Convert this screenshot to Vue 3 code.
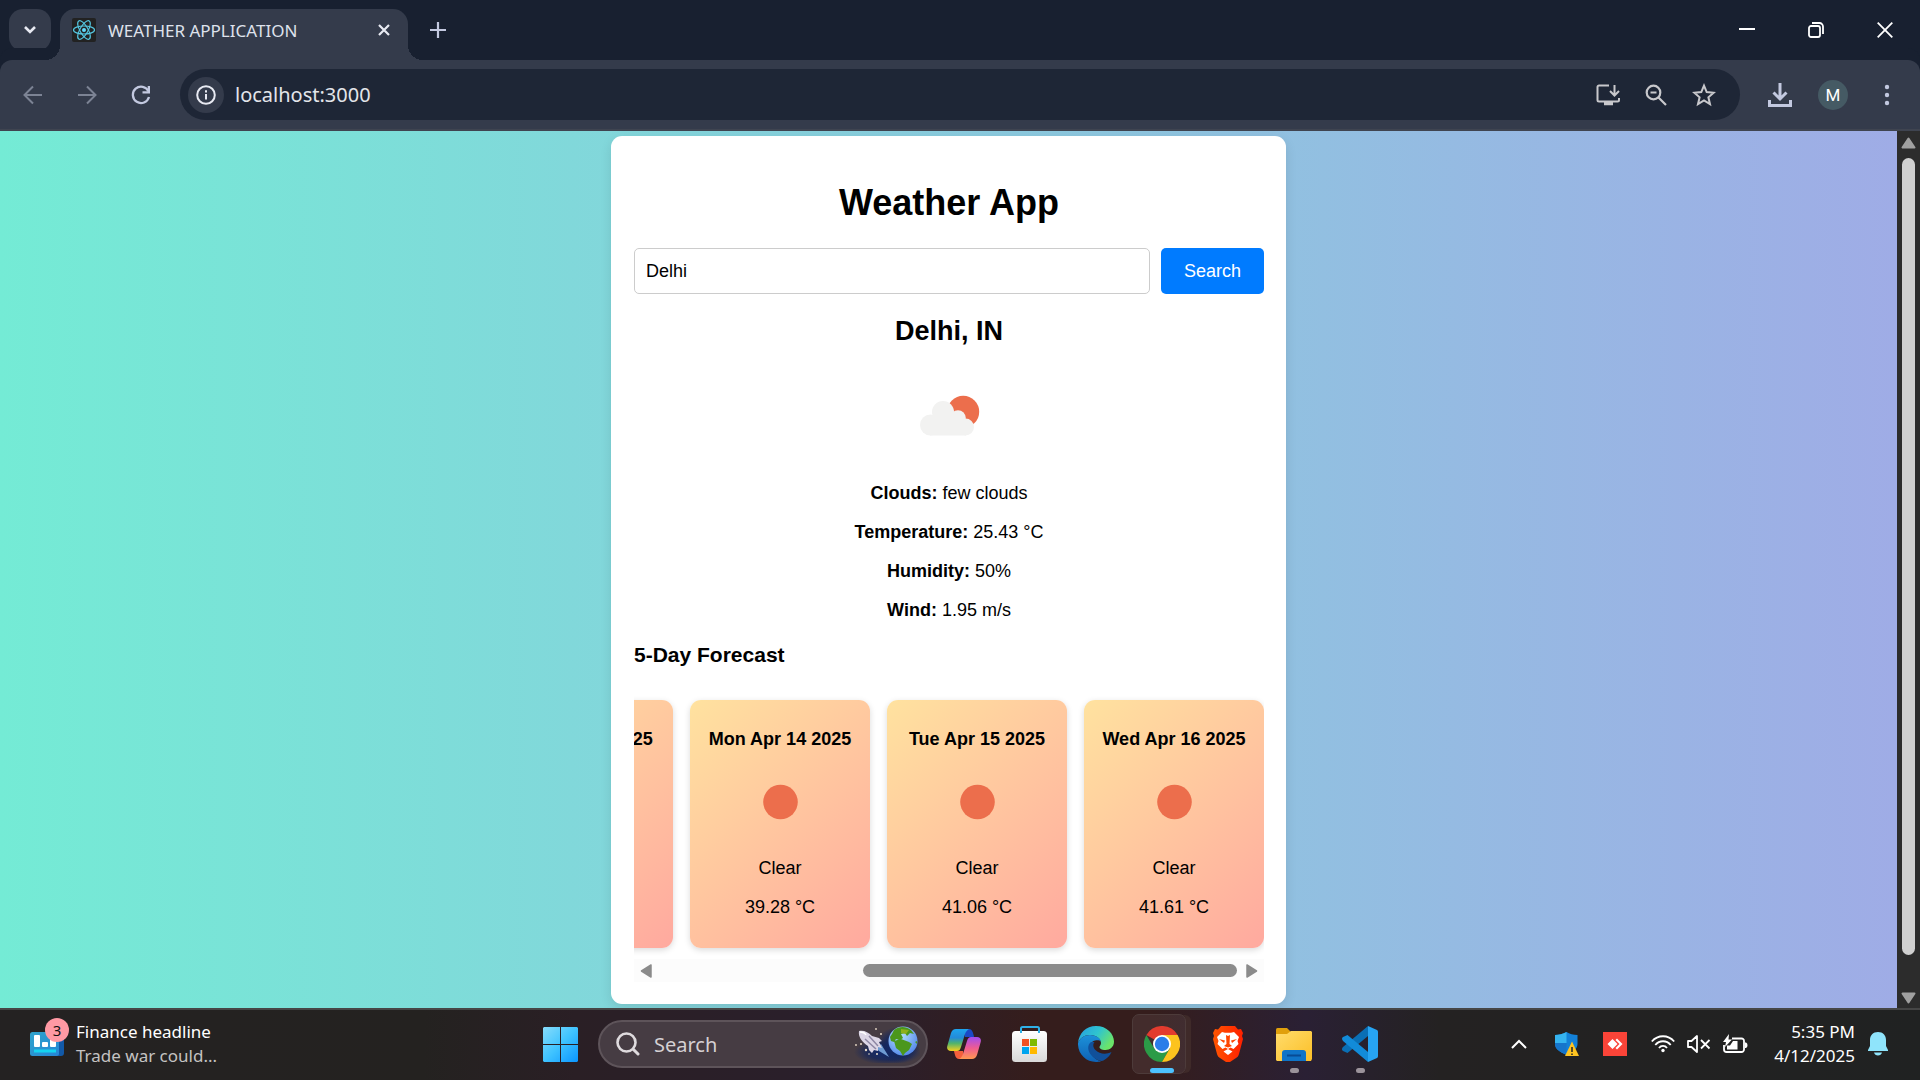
<script setup>
import { ref } from 'vue'

const address = ref('localhost:3000')
const city = ref('Delhi')
const taskQuery = ref('')

const details = [
  { label: 'Clouds:', value: 'few clouds' },
  { label: 'Temperature:', value: '25.43 °C' },
  { label: 'Humidity:', value: '50%' },
  { label: 'Wind:', value: '1.95 m/s' },
]

const forecast = [
  { date: 'Sun Apr 13 2025', sky: 'Clear', temp: '37.46 °C' },
  { date: 'Mon Apr 14 2025', sky: 'Clear', temp: '39.28 °C' },
  { date: 'Tue Apr 15 2025', sky: 'Clear', temp: '41.06 °C' },
  { date: 'Wed Apr 16 2025', sky: 'Clear', temp: '41.61 °C' },
]
</script>

<template>
  <div class="screen">
    <header class="tabs">
      <button class="tab-search" aria-label="Search tabs">
        <svg width="14" height="10" viewBox="0 0 14 10"><path d="M2 2l5 5 5-5" fill="none" stroke="#e8eaf2" stroke-width="2.6" /></svg>
      </button>
      <div class="tab">
        <svg class="favicon" width="24" height="24" viewBox="0 0 24 24">
          <rect width="24" height="24" rx="2" fill="#222" />
          <g fill="none" stroke="#55c8e2" stroke-width="1.2">
            <ellipse cx="12" cy="12" rx="10.5" ry="4" />
            <ellipse cx="12" cy="12" rx="10.5" ry="4" transform="rotate(60 12 12)" />
            <ellipse cx="12" cy="12" rx="10.5" ry="4" transform="rotate(120 12 12)" />
          </g>
          <circle cx="12" cy="12" r="2" fill="#61dafb" />
        </svg>
        <span class="tab-title">WEATHER APPLICATION</span>
        <button class="bare" aria-label="Close tab">
          <svg width="12" height="12" viewBox="0 0 12 12"><path d="M1 1l10 10M11 1L1 11" stroke="#e8eaf2" stroke-width="2.2" /></svg>
        </button>
      </div>
      <button class="bare new-tab" aria-label="New tab">
        <svg width="16" height="16" viewBox="0 0 16 16"><path d="M8 0v16M0 8h16" stroke="#c3c9e0" stroke-width="2.2" /></svg>
      </button>
      <div class="window-controls">
        <button class="bare" aria-label="Minimize"><svg width="16" height="16" viewBox="0 0 16 16"><path d="M0 7h16" stroke="#fff" stroke-width="2" /></svg></button>
        <button class="bare" aria-label="Restore">
          <svg width="16" height="16" viewBox="0 0 16 16" fill="none" stroke="#fff" stroke-width="1.8"><rect x="1" y="4" width="11" height="11" rx="2" /><path d="M4 1h7.500a3.500 3.500 0 0 1 3.500 3.500V12" /></svg>
        </button>
        <button class="bare" aria-label="Close"><svg width="16" height="16" viewBox="0 0 16 16"><path d="M.7.7l14.600 14.600M15.300.7L.7 15.300" stroke="#fff" stroke-width="1.800" /></svg></button>
      </div>
    </header>

    <nav class="toolbar">
      <button class="bare" aria-label="Back"><svg width="20" height="20" viewBox="0 0 20 20"><path d="M19 10H2M10 1.500L1.500 10l8.500 8.500" fill="none" stroke="#7c8394" stroke-width="2" /></svg></button>
      <button class="bare" aria-label="Forward"><svg width="20" height="20" viewBox="0 0 20 20"><path d="M1 10h17M10 1.500l8.500 8.500-8.500 8.500" fill="none" stroke="#7c8394" stroke-width="2" /></svg></button>
      <button class="bare" aria-label="Reload"><svg width="20" height="20" viewBox="0 0 20 20"><path d="M17.500 6.300A8.200 8.200 0 1 0 18 12" fill="none" stroke="#c3c9e0" stroke-width="2.300" /><path d="M19 1v7.500h-7.500V6.200h5.200V1z" fill="#c3c9e0" /></svg></button>
      <div class="omnibox">
        <button class="site-info" aria-label="Site information">
          <svg width="20" height="20" viewBox="0 0 20 20"><circle cx="10" cy="10" r="8.800" fill="none" stroke="#e8eaf2" stroke-width="2" /><path d="M10 9v5.500M10 5.300v2.200" stroke="#e8eaf2" stroke-width="2" /></svg>
        </button>
        <input v-model="address" class="address" type="text" aria-label="Address" />
        <button class="bare" aria-label="Install app">
          <svg width="24" height="22" viewBox="0 0 24 22" fill="none" stroke="#c8c8cc" stroke-width="2"><path d="M13 1.500H3A1.500 1.500 0 0 0 1.500 3v13A1.500 1.500 0 0 0 3 17.500h18.500A1.500 1.500 0 0 0 23 16v-2" /><path d="M18.500 1v10M14 7l4.500 4.500L23 7" /><path d="M8 19.500h9" stroke-width="3.500" /></svg>
        </button>
        <button class="bare" aria-label="Zoom">
          <svg width="22" height="22" viewBox="0 0 22 22" fill="none" stroke="#c8c8cc" stroke-width="2.200"><circle cx="8.500" cy="8.500" r="6.800" /><path d="M13.500 13.500l7.500 7.500M5.500 8.500h6" /></svg>
        </button>
        <button class="bare" aria-label="Bookmark">
          <svg width="24" height="24" viewBox="0 0 24 24"><path d="M12 2.600l2.700 6.500 7 .6-5.300 4.600 1.600 6.900-6-3.700-6 3.700 1.600-6.900-5.300-4.600 7-.6z" fill="none" stroke="#c8c8cc" stroke-width="2" /></svg>
        </button>
      </div>
      <button class="bare" aria-label="Downloads">
        <svg width="24" height="26" viewBox="0 0 24 26" fill="none" stroke="#c3c9e0" stroke-width="3"><path d="M12 1v15M5.500 10.500L12 17l6.500-6.500M1.500 18v5.500h21V18" /></svg>
      </button>
      <button class="avatar" aria-label="Profile">M</button>
      <button class="bare" aria-label="Menu"><svg width="6" height="22" viewBox="0 0 6 22" fill="#c3c9e0"><circle cx="3" cy="3" r="2.200" /><circle cx="3" cy="11" r="2.200" /><circle cx="3" cy="19" r="2.200" /></svg></button>
    </nav>

    <div class="viewport">
      <main class="page">
        <section class="app">
          <h1>Weather App</h1>
          <form class="search" @submit.prevent>
            <input v-model="city" type="text" aria-label="City" />
            <button type="submit">Search</button>
          </form>

          <h2>Delhi, IN</h2>
          <div class="sky-now">
            <svg width="90" height="90" viewBox="0 0 90 90">
              <circle cx="59.200" cy="42.800" r="16" fill="#ec6e4c" />
              <g fill="#f2f2f1">
                <circle cx="39" cy="43" r="11" />
                <circle cx="26.500" cy="56" r="10.500" />
                <circle cx="54" cy="49" r="7.800" />
                <circle cx="61.500" cy="58" r="8.500" />
                <path d="M26 50h36v16.500H26z" />
              </g>
            </svg>
          </div>
          <p v-for="item in details" :key="item.label"><strong>{{ item.label }}</strong> {{ item.value }}</p>

          <h3>5-Day Forecast</h3>
          <ul class="forecast">
            <li v-for="day in forecast" :key="day.date" class="day">
              <p><strong>{{ day.date }}</strong></p>
              <div class="sky-day">
                <svg width="68" height="68" viewBox="0 0 68 68"><circle cx="34.500" cy="34" r="17.300" fill="#ec6e4c" /></svg>
              </div>
              <p>{{ day.sky }}</p>
              <p>{{ day.temp }}</p>
            </li>
          </ul>
          <div class="h-scroll">
            <button class="bare" aria-label="Scroll left"><svg width="12" height="14" viewBox="0 0 12 14"><path d="M11 1v12L1.500 7z" fill="#8b8b8b" stroke="#8b8b8b" stroke-width="1.500" stroke-linejoin="round" /></svg></button>
            <div class="h-track"><div class="h-thumb"></div></div>
            <button class="bare" aria-label="Scroll right"><svg width="12" height="14" viewBox="0 0 12 14"><path d="M1 1v12l9.500-6z" fill="#8b8b8b" stroke="#8b8b8b" stroke-width="1.500" stroke-linejoin="round" /></svg></button>
          </div>
        </section>
      </main>
      <div class="v-scroll">
        <button class="bare" aria-label="Scroll up"><svg width="15" height="12" viewBox="0 0 15 12"><path d="M1.500 10.500h12L7.500 1.500z" fill="#a0a0a0" stroke="#a0a0a0" stroke-width="2" stroke-linejoin="round" /></svg></button>
        <div class="v-track"><div class="v-thumb"></div></div>
        <button class="bare" aria-label="Scroll down"><svg width="15" height="12" viewBox="0 0 15 12"><path d="M1.500 1.500h12l-6 9z" fill="#a0a0a0" stroke="#a0a0a0" stroke-width="2" stroke-linejoin="round" /></svg></button>
      </div>
    </div>

    <footer class="taskbar">
      <button class="widget">
        <span class="widget-icon">
          <svg width="34" height="24" viewBox="0 0 34 24">
            <defs><linearGradient id="fin" x1="0" x2="1" y1="0" y2="1"><stop offset="0" stop-color="#2fa3cb" /><stop offset="1" stop-color="#2686d6" /></linearGradient></defs>
            <path d="M26 0h5a3 3 0 0 1 3 3v18a3 3 0 0 1-3 3h-5z" fill="#1259a8" />
            <rect width="29" height="24" rx="2.500" fill="url(#fin)" />
            <path d="M4 17.500h22v3H4z" fill="#14d4f0" />
            <rect x="4" y="3" width="6" height="12" rx="1" fill="#fff" /><rect x="12" y="10" width="6" height="5" rx="1" fill="#fff" /><rect x="20" y="5" width="6" height="10" rx="1" fill="#fff" />
          </svg>
          <span class="badge">3</span>
        </span>
        <span class="widget-text"><span>Finance headline</span><span class="dim">Trade war could...</span></span>
      </button>

      <div class="dock">
        <button class="cell" aria-label="Start">
          <svg width="35" height="35" viewBox="0 0 35 35">
            <defs><linearGradient id="win" gradientUnits="userSpaceOnUse" x1="0" y1="0" x2="35" y2="35"><stop offset="0" stop-color="#87dcfb" /><stop offset=".5" stop-color="#3fc3ff" /><stop offset="1" stop-color="#0a95ff" /></linearGradient></defs>
            <path d="M1 0h16v17H0V1zM18 0h16l1 1v16H18zM0 18h17v17H1l-1-1zM18 18h17v16l-1 1H18z" fill="url(#win)" />
          </svg>
        </button>
        <div class="task-search">
          <svg width="24" height="24" viewBox="0 0 24 24" fill="none" stroke="#dfdbde" stroke-linecap="round"><circle cx="10.500" cy="10.500" r="9" stroke-width="2.600" /><path d="M17.500 17.500l4.500 4.500" stroke-width="3" /></svg>
          <input v-model="taskQuery" type="text" placeholder="Search" aria-label="Search Windows" />
          <svg width="66" height="38" viewBox="0 0 66 38">
            <defs>
              <radialGradient id="glow"><stop offset="0" stop-color="#0d2a78" /><stop offset=".6" stop-color="#14265c" stop-opacity=".8" /><stop offset="1" stop-color="#14265c" stop-opacity="0" /></radialGradient>
              <radialGradient id="sea" cx=".4" cy=".3" r=".8"><stop offset="0" stop-color="#b6e2ff" /><stop offset="1" stop-color="#4a7fe8" /></radialGradient>
            </defs>
            <ellipse cx="34" cy="27" rx="34" ry="13" fill="url(#glow)" /><ellipse cx="44" cy="20" rx="22" ry="18" fill="url(#glow)" />
            <path d="M22 23l5-4 8 13-10-6z" fill="#86b8ee" opacity=".8" />
            <path d="M5 6c5-1 9 1 13 5l7 2 3 3-3 1 3 6-4-1v4l-4-1-2 3-3-3-1-4C8 17 4 12 5 6z" fill="#dcd6e6" />
            <path d="M11 14l11 10M15 11l9 10" stroke="#8e87a4" stroke-width="1.500" /><path d="M6 7c3 0 5 1 6 3" stroke="#fff" stroke-width="1.500" fill="none" />
            <g fill="#e9dcc8"><circle cx="22" cy="4" r=".9" /><circle cx="27" cy="9" r="1" /><circle cx="2" cy="20" r=".9" /><circle cx="7" cy="19" r="1" /><circle cx="12" cy="25" r="1.200" /><circle cx="15" cy="29" r=".8" /><circle cx="23" cy="29" r="1" /></g>
            <circle cx="49" cy="16" r="14.500" fill="url(#sea)" />
            <path d="M40 5c5-4 12-4 17 0l3 4-4-1-3 3-2-3-4 1 2 4-3 2-4-1-2 3-3-1-1-4 2-3zM40 16l7-2 8 3 3 2-3 6-4 3-2 3-3-5-4-3zM61 17l2-1v3z" fill="#4b971d" /><path d="M47 4l8 1-3 4-5-1z" fill="#8eb01c" />
          </svg>
        </div>
        <button class="cell" aria-label="Copilot">
          <svg width="34" height="30" viewBox="0 0 34 30">
            <defs>
              <linearGradient id="cpA" x1="0" x2="0" y1="0" y2="1"><stop offset="0" stop-color="#1ea4ee" /><stop offset=".4" stop-color="#238bd8" /><stop offset=".65" stop-color="#50b36c" /><stop offset="1" stop-color="#f6d01d" /></linearGradient>
              <linearGradient id="cpB" x1="0" x2="0" y1="0" y2="1"><stop offset="0" stop-color="#a14cf0" /><stop offset=".5" stop-color="#ee5c92" /><stop offset="1" stop-color="#ff9850" /></linearGradient>
            </defs>
            <path d="M17 0h5c3 0 4 3 5 8h-9z" fill="#1b49c6" />
            <path d="M17 30h-5c-3 0-4-3-5-8h9z" fill="#f4603c" />
            <path d="M9 0h14c-2 0-4 2-5 5l-4 13c-1 3-2 4-4 4H4c-3 0-4.500-2-3.700-5L4 4C5 1.500 6.500 0 9 0z" fill="url(#cpA)" />
            <path d="M25 30H11c2 0 4-2 5-5l4-13c1-3 2-4 4-4h6c3 0 4.500 2 3.700 5L30 26c-1 2.500-2.500 4-5 4z" fill="url(#cpB)" />
          </svg>
        </button>
        <button class="cell" aria-label="Microsoft Store">
          <svg width="36" height="36" viewBox="0 0 36 36">
            <defs><linearGradient id="bag" x1="0" x2="0" y1="0" y2="1"><stop offset="0" stop-color="#fff" /><stop offset="1" stop-color="#d9d9d9" /></linearGradient></defs>
            <rect y="5" width="35" height="31" rx="3.500" fill="url(#bag)" /><path d="M9 7V2.500A1.500 1.500 0 0 1 10.500 1h15A1.500 1.500 0 0 1 27 2.500V7" fill="none" stroke="#2fb1e8" stroke-width="2" />
            <path d="M10 13h7v7h-7z" fill="#f25022" /><path d="M18 13h7v7h-7z" fill="#7fba00" /><path d="M10 21h7v7h-7z" fill="#00a4ef" /><path d="M18 21h7v7h-7z" fill="#ffb900" />
          </svg>
        </button>
        <button class="cell" aria-label="Edge">
          <svg width="36" height="36" viewBox="0 0 36 36">
            <defs>
              <linearGradient id="edT" x1="0" x2="1" y1="0" y2=".5"><stop offset="0" stop-color="#259be0" /><stop offset=".55" stop-color="#2fc4cf" /><stop offset="1" stop-color="#6be46a" /></linearGradient>
              <linearGradient id="edB" x1="0" x2="0" y1="0" y2="1"><stop offset="0" stop-color="#1c91d9" /><stop offset="1" stop-color="#0f62b5" /></linearGradient>
            </defs>
            <path d="M0 17C1 7 8 0 18 0c11 0 18 8 18 15.500C36 21 32 24 27.500 24c-4 0-6.300-1.500-6-3 .3-1.300 1.500-2 1.500-4 0-4-4.500-8-11-8C6 9 2 12 0 17z" fill="url(#edT)" />
            <path d="M0 17c2-5 6-8 12-8 6.500 0 11 4 11 6.500-2-2-9-2-11 3.500-2 7 4 15 11 16.300C21 36 19.500 36 18 36 8 36-.5 28 0 17z" fill="url(#edB)" />
            <path d="M13 16c-4 3-3.500 9 .5 13.500 3.500 4 8.500 6 11.500 5.300 4-2 7-5 8.500-8.800-6 3-12.500 1.500-15.500-1.500-3-2.500-3.500-6-1.500-8.500z" fill="#11509a" />
          </svg>
        </button>
        <button class="cell active" aria-label="Chrome">
          <svg width="36" height="36" viewBox="0 0 36 36">
            <path d="M18 18L2.400 9A18 18 0 0 1 33.600 9z" fill="#e33b2e" /><path d="M2.400 9A18 18 0 0 0 18 36l7.800-13.500L18 18l-7.800 4.500z" fill="#2b9b47" /><path d="M33.600 9A18 18 0 0 1 18 36l7.800-13.500L18 9z" fill="#fcc31e" />
            <circle cx="18" cy="18" r="9" fill="#fff" /><circle cx="18" cy="18" r="7.200" fill="#2a7de9" />
          </svg>
        </button>
        <button class="cell" aria-label="Brave">
          <svg width="30" height="36" viewBox="0 0 30 36">
            <defs><linearGradient id="brv"><stop offset="0" stop-color="#ff5500" /><stop offset="1" stop-color="#ff2000" /></linearGradient></defs>
            <path d="M8 0h14l3 3.500 3-.5 2 4-1 3 1 3-4 15c-.5 2-1.500 3-3 4l-6 4h-4l-6-4c-1.500-1-2.500-2-3-4L0 13l1-3-1-3 2-4 3 .5z" fill="url(#brv)" />
            <path d="M9 6l3 .8h6L21 6l5 5-1.500 4 1 3-5 5-3-1.500L15 23l-2.500-1.500-3 1.500-5-5 1-3L4 11z" fill="#fff" />
            <path d="M6 13l6 1.500-1 2.500zM24 13l-6 1.500 1 2.500zM13 9l2 1 2-1-.5 9 2.500 2-4 1.500L11 20l2.500-2z" fill="#ff4500" /><path d="M15 23l4.500 2.500L15 29l-4.500-3.500z" fill="#fff" />
          </svg>
        </button>
        <button class="cell running" aria-label="File Explorer">
          <svg width="36" height="33" viewBox="0 0 36 33">
            <defs><linearGradient id="fold" x1="0" x2="1" y1="0" y2="1"><stop offset="0" stop-color="#ffdc6c" /><stop offset="1" stop-color="#fcbf27" /></linearGradient></defs>
            <path d="M0 1.500Q0 0 1.500 0H11l4 4-3 6H0z" fill="#e0a00c" /><path d="M0 6h11l4-3h20l1 1v27l-1 2H1l-1-1z" fill="url(#fold)" />
            <path d="M6 33v-8a3 3 0 0 1 3-3h18a3 3 0 0 1 3 3v8z" fill="#0f74c8" /><path d="M11 27.500h14" stroke="#084b94" stroke-width="2" />
          </svg>
        </button>
        <button class="cell running" aria-label="Visual Studio Code">
          <svg width="36" height="36" viewBox="0 0 36 36">
            <path d="M26 0v10L5.500 27 1 25c-1.300-1-1.300-2.500 0-4z" fill="#0a6fb5" /><path d="M26 36V26L5.500 9 1 11c-1.300 1-1.300 2.500 0 4z" fill="#128bd9" /><path d="M26 0l9 4q1 .6 1 2v24q0 1.400-1 2l-9 4z" fill="#27a4f2" />
          </svg>
        </button>
      </div>

      <div class="tray">
        <button class="bare" aria-label="Show hidden icons"><svg width="16" height="10" viewBox="0 0 16 10"><path d="M1 9l7-7 7 7" fill="none" stroke="#fff" stroke-width="2" /></svg></button>
        <button class="bare" aria-label="Windows Security">
          <svg width="24" height="24" viewBox="0 0 24 24">
            <path d="M11.500 0c3 2 7 3 11 3v9c0 5-5 8-11 11C5 20 0 17 0 12V3c4 0 8-1 11.500-3z" fill="#1381d8" /><path d="M11.500 0v11H0V3c4 0 8-1 11.500-3z" fill="#35b4f0" /><path d="M0 11h11.500v12C5 20 0 17 0 12z" fill="#1675cb" /><path d="M17 9.500l7 14.500H10z" fill="#ffc421" /><path d="M17 15v5M17 21.500v1.500" stroke="#222" stroke-width="1.500" />
          </svg>
        </button>
        <button class="bare" aria-label="AnyDesk"><svg width="24" height="24" viewBox="0 0 24 24"><path d="M0 0h24v24H0z" fill="#fb4438" /><path d="M9.500 7l5 5-5 5-5-5zM12.500 8L14 6.500l5.500 5.500-5.500 5.500-1.500-1.500 4-4z" fill="#fff" /></svg></button>
        <div class="status">
          <svg width="24" height="18" viewBox="0 0 24 18" fill="none" stroke="#fff" stroke-width="1.800"><path d="M.8 6.500C7-.5 17-.5 23.200 6.500M4.300 10c4-5 11.400-5 15.400 0M8 13c2-2.800 6-2.800 8 0" /><circle cx="12" cy="15.500" r="1.700" fill="#fff" stroke="none" /></svg>
          <svg width="24" height="18" viewBox="0 0 24 18" fill="none" stroke="#fff" stroke-width="1.800"><path d="M1 6h3.500L10 1v16l-5.500-5H1z" stroke-linejoin="round" /><path d="M14 5l8.500 8.500M22.500 5L14 13.500" /></svg>
          <svg width="25" height="20" viewBox="0 0 25 20"><path d="M9 4.500h9.500A2.500 2.500 0 0 1 21 7v8.500a2.500 2.500 0 0 1-2.500 2.500h-15A2.500 2.500 0 0 1 1 15.500V11" fill="none" stroke="#fff" stroke-width="1.800" /><path d="M10 7h4.500v8.500H4V11.500h3zM22 8.500h1q1.500.5 1.500 2.700T23 14h-1zM6 0L0 8h3l-1 5 7-7.500H5.500z" fill="#fff" /></svg>
        </div>
        <div class="clock"><span>5:35 PM</span><span>4/12/2025</span></div>
        <button class="bare" aria-label="Notifications"><svg width="20" height="24" viewBox="0 0 20 24"><path d="M10 0c5 0 8 3.500 8 8v6l2 4v1H0v-1l2-4V8c0-4.500 3-8 8-8zM6 20.500h8c-.5 2-2 3-4 3s-3.500-1-4-3z" fill="#8fe4fb" /></svg></button>
      </div>
    </footer>
  </div>
</template>

<style>
body {
  background: #202020;
}
</style>

<style scoped>
.screen {
  min-height: 100vh;
  display: flex;
  flex-direction: column;
  font-family: "Noto Sans", "Open Sans", sans-serif;
  color: #fff;
}
.screen * {
  box-sizing: border-box;
}
svg {
  display: block;
  flex: none;
}
button {
  border: 0;
  padding: 0;
  background: none;
  color: inherit;
  font: inherit;
}
input {
  border: 0;
  padding: 0;
  background: none;
  min-width: 0;
  outline: 0;
}
.bare {
  display: flex;
  align-items: center;
  justify-content: center;
}

/* Tab strip */
.tabs {
  height: 60px;
  display: flex;
  padding: 9px 27px 0 9px;
  background: #182030;
}
.tab-search {
  width: 42px;
  height: 42px;
  border-radius: 14px;
  background: #343b4b;
  display: grid;
  place-items: center;
}
.tab {
  position: relative;
  width: 348px;
  margin-left: 9px;
  padding: 0 18px 9px 12px;
  border-radius: 15px 15px 0 0;
  background: #343b4b;
  display: flex;
  align-items: center;
  gap: 12px;
}
.tab::before,
.tab::after {
  content: "";
  position: absolute;
  bottom: 0;
  width: 15px;
  height: 15px;
}
.tab::before {
  right: 100%;
  background: radial-gradient(circle at 0 0, transparent 15px, #343b4b 15px);
}
.tab::after {
  left: 100%;
  background: radial-gradient(circle at 100% 0, transparent 15px, #343b4b 15px);
}
.tab-title {
  flex: 1;
  font-size: 17px;
  color: #dfe2ec;
}
.new-tab {
  width: 60px;
  height: 42px;
}
.window-controls {
  margin-left: auto;
  height: 42px;
  display: flex;
  align-items: center;
  gap: 53px;
}

/* Toolbar */
.toolbar {
  height: 71px;
  display: flex;
  align-items: center;
  padding: 0 30px 0 23px;
  gap: 34px;
  background: #343b4b;
  border-bottom: 2px solid #3f4450;
  border-radius: 12px 12px 0 0;
  box-shadow: 0 -12px 0 0 #182030;
}
.omnibox {
  flex: 1;
  height: 51px;
  margin: 0 -6px 0 -5px;
  padding: 0 24px 0 8px;
  border-radius: 26px;
  background: #1e2636;
  display: flex;
  align-items: center;
  gap: 25px;
}
.site-info {
  width: 36px;
  height: 36px;
  border-radius: 50%;
  background: #343b4b;
  display: grid;
  place-items: center;
}
.address {
  flex: 1;
  margin-left: -14px;
  font: 20px "Noto Sans", sans-serif;
  color: #e3e5ea;
}
.avatar {
  width: 30px;
  height: 30px;
  margin: 0 2px 0 -8px;
  border-radius: 50%;
  background: #455a64;
  font: 400 17px Roboto, sans-serif;
}

/* Browser viewport */
.viewport {
  flex: 1;
  display: flex;
  background: #2c2c2c;
}
.page {
  flex: 1;
  padding: 5px 16px 4px;
  background: linear-gradient(to right, #74ebd5, #9face6);
  color: #000;
  font: 18px/21px "Liberation Sans", Arial, sans-serif;
}
.app {
  max-width: 675px;
  margin: 0 auto;
  padding: 22px 22px 22px 23px;
  border-radius: 11px;
  background: #fff;
  box-shadow: 0 4px 12px rgba(0, 0, 0, 0.1);
  text-align: center;
}
h1 {
  margin: 24px 0;
  font-size: 36px;
  line-height: 42px;
}
.search {
  display: flex;
  gap: 11px;
}
.search input {
  flex: 1;
  height: 46px;
  padding: 0 11px;
  border: 1px solid #ccc;
  border-radius: 5px;
  font: 18px "Liberation Sans", Arial, sans-serif;
  color: #000;
}
.search button {
  padding: 0 23px;
  border-radius: 5px;
  background: #007bff;
  color: #fff;
}
h2 {
  margin: 22px 0;
  font-size: 27px;
  line-height: 31px;
}
.sky-now {
  height: 96px;
  display: flex;
  justify-content: center;
}
p {
  margin: 18px 0;
}
h3 {
  margin: 22px 0;
  font-size: 21px;
  line-height: 24px;
  text-align: left;
}
.forecast {
  margin: 0;
  padding: 11px 0;
  list-style: none;
  display: flex;
  justify-content: flex-end;
  gap: 17px;
  overflow: hidden;
}
.day {
  flex: none;
  width: 180px;
  padding: 11px 11px 12px;
  border-radius: 11px;
  background: linear-gradient(135deg, #ffe29f, #ffa99f);
  box-shadow: 0 2px 6px rgba(0, 0, 0, 0.15);
  white-space: nowrap;
  overflow: hidden;
}
.sky-day {
  height: 72px;
  display: flex;
  justify-content: center;
}
.h-scroll {
  height: 23px;
  padding: 0 6px;
  display: flex;
  align-items: center;
  gap: 9px;
  background: #fcfcfc;
}
.h-track {
  flex: 1;
  display: flex;
  justify-content: flex-end;
}
.h-thumb {
  width: 65%;
  height: 13px;
  border-radius: 7px;
  background: #8b8b8b;
}
.v-scroll {
  width: 23px;
  padding: 6px 0 4px;
  display: flex;
  flex-direction: column;
  align-items: center;
  gap: 9px;
}
.v-track {
  flex: 1;
  display: flex;
  padding-bottom: 28px;
}
.v-thumb {
  width: 13px;
  border-radius: 7px;
  background: #d0d0d0;
}

/* Taskbar */
.taskbar {
  height: 72px;
  padding-bottom: 2px;
  display: grid;
  grid-template-columns: 1fr auto 1fr;
  align-items: center;
  border-top: 2px solid #464646;
  background: linear-gradient(to right, #242222, #242220 22%, #2a1f25 30%, #2a1f2c 45%, #351d1c 54%, #351d1c 60%, #2a2034 68%, #242222 75%, #202222);
}
.widget {
  display: flex;
  align-items: center;
  gap: 12px;
  padding-left: 30px;
  text-align: left;
}
.widget-icon {
  position: relative;
}
.badge {
  position: absolute;
  top: -14px;
  left: 15px;
  width: 24px;
  height: 24px;
  border-radius: 50%;
  background: #ff99a4;
  color: #111;
  font-size: 15px;
  line-height: 24px;
  text-align: center;
}
.widget-text,
.clock {
  display: flex;
  flex-direction: column;
  font-size: 17px;
  line-height: 24px;
}
.dim {
  color: #c4c2c2;
}
.dock {
  display: flex;
  align-items: center;
}
.cell {
  position: relative;
  width: 66px;
  height: 60px;
  display: grid;
  place-items: center;
}
.task-search {
  width: 330px;
  height: 48px;
  margin: 0 3px 0 5px;
  padding: 0 6px 0 16px;
  border: 2px solid #5e545a;
  border-radius: 24px;
  background: #463c43;
  display: flex;
  align-items: center;
  gap: 14px;
}
.task-search input {
  flex: 1;
  font: 20px "Noto Sans", sans-serif;
  color: #fff;
}
.task-search input::placeholder {
  color: #d5d0d3;
  opacity: 1;
}
.active::before {
  content: "";
  position: absolute;
  inset: 0 9px 0 3px;
  border: 1px solid #4d3b3a;
  border-radius: 7px;
  background: rgba(255, 255, 255, 0.07);
  box-shadow: 6px 0 0 -1px #3f2a29;
}
.active svg {
  position: relative;
}
.active::after,
.running::after {
  content: "";
  position: absolute;
  bottom: 1px;
  left: 50%;
  width: 9px;
  height: 5px;
  margin-left: -4px;
  border-radius: 3px;
  background: #9b939b;
}
.active::after {
  width: 24px;
  margin-left: -12px;
  background: #4cc2ff;
}
.tray {
  display: flex;
  align-items: center;
  justify-content: flex-end;
  gap: 24px;
  padding-right: 32px;
}
.tray > :first-child {
  margin-right: 4px;
}
.status {
  display: flex;
  align-items: center;
  gap: 12px;
}
.clock {
  width: 96px;
  margin: 0 -11px 0 -13px;
  text-align: right;
}
</style>
